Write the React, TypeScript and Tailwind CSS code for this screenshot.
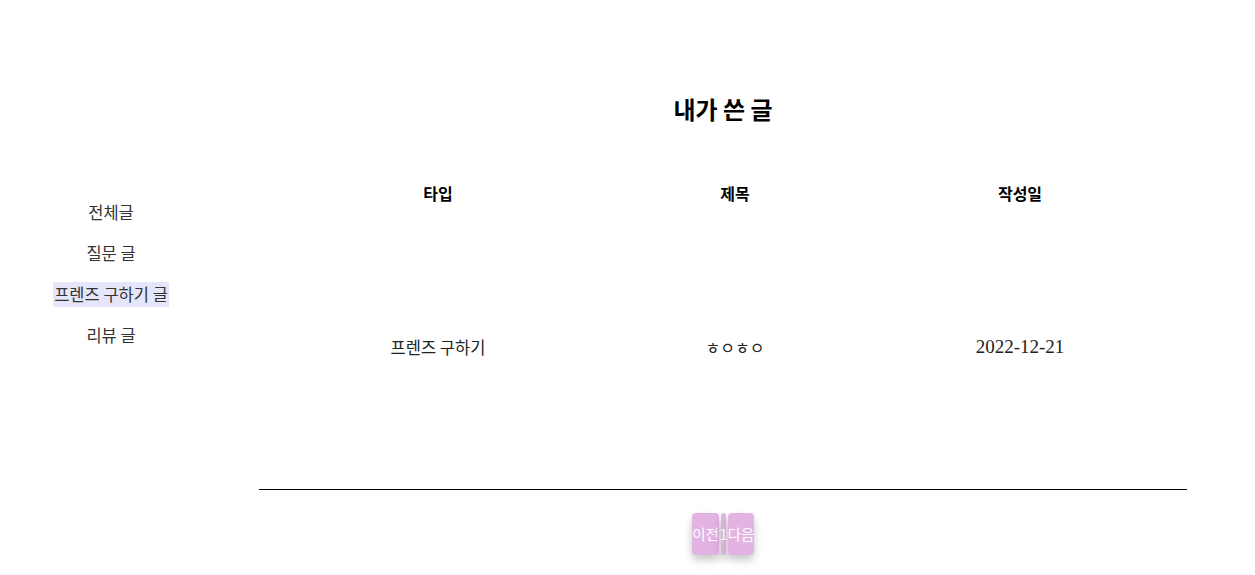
const KR = "font-['Noto_Sans_CJK_KR',sans-serif]";

const menu = ["전체글", "질문 글", "프렌즈 구하기 글", "리뷰 글"];

const posts = [{ type: "프렌즈 구하기", title: "ㅎㅇㅎㅇ", date: "2022-12-21" }];

export default function App() {
  return (
    <div className={`flex h-[575px] w-[1255px] bg-white text-[#222] ${KR}`}>
      <aside className="flex w-[222px] shrink-0 flex-col items-center pt-[200px]">
        {menu.map((m, i) => (
          <button
            key={m}
            className={`mb-[16px] h-[25px] px-[1px] text-[16.5px] leading-[25px] text-[#333] ${
              i === 2 ? "bg-[#e6e6fa]" : ""
            }`}
          >
            {m}
          </button>
        ))}
      </aside>

      <main className="ml-[37px] flex w-[928px] flex-col">
        <h1 className="mt-[92px] text-center text-[24px] font-bold leading-[34px] text-black">
          내가 쓴 글
        </h1>

        <div className="mt-[50px] h-[314px] border-b border-black">
          <div className="grid grid-cols-[358px_236px_334px] text-[16px] font-bold text-black">
            <div className="text-center leading-[34px]">타입</div>
            <div className="text-center leading-[34px]">제목</div>
            <div className="text-center leading-[34px]">작성일</div>
          </div>
          {posts.map((p) => (
            <div
              key={p.date}
              className="mt-[120px] grid grid-cols-[358px_236px_334px]"
            >
              <div className="text-center text-[16.5px] leading-[34px] text-[#222]">{p.type}</div>
              <div className="text-center text-[16px] leading-[34px] text-[#222]">{p.title}</div>
              <div className="text-center font-['Liberation_Serif',serif] text-[19px] leading-[34px] text-[#222]">
                {p.date}
              </div>
            </div>
          ))}
        </div>

        <div className="mt-[23px] flex justify-center gap-[2px]">
          <button className="flex h-[42px] w-[27px] items-center justify-center overflow-visible whitespace-nowrap rounded-[4px] bg-[#e3b4e3] text-[14.5px] text-white shadow-[0_5px_8px_rgba(0,0,0,0.22)]">
            이전
          </button>
          <button className="flex h-[42px] w-[5px] items-center justify-center overflow-visible whitespace-nowrap rounded-[3px] bg-[#e3b4e3] text-[14.5px] text-white shadow-[0_5px_8px_rgba(0,0,0,0.22)]">
            1
          </button>
          <button className="flex h-[42px] w-[26px] items-center justify-center overflow-visible whitespace-nowrap rounded-[4px] bg-[#e3b4e3] text-[14.5px] text-white shadow-[0_5px_8px_rgba(0,0,0,0.22)]">
            다음
          </button>
        </div>
      </main>
    </div>
  );
}
